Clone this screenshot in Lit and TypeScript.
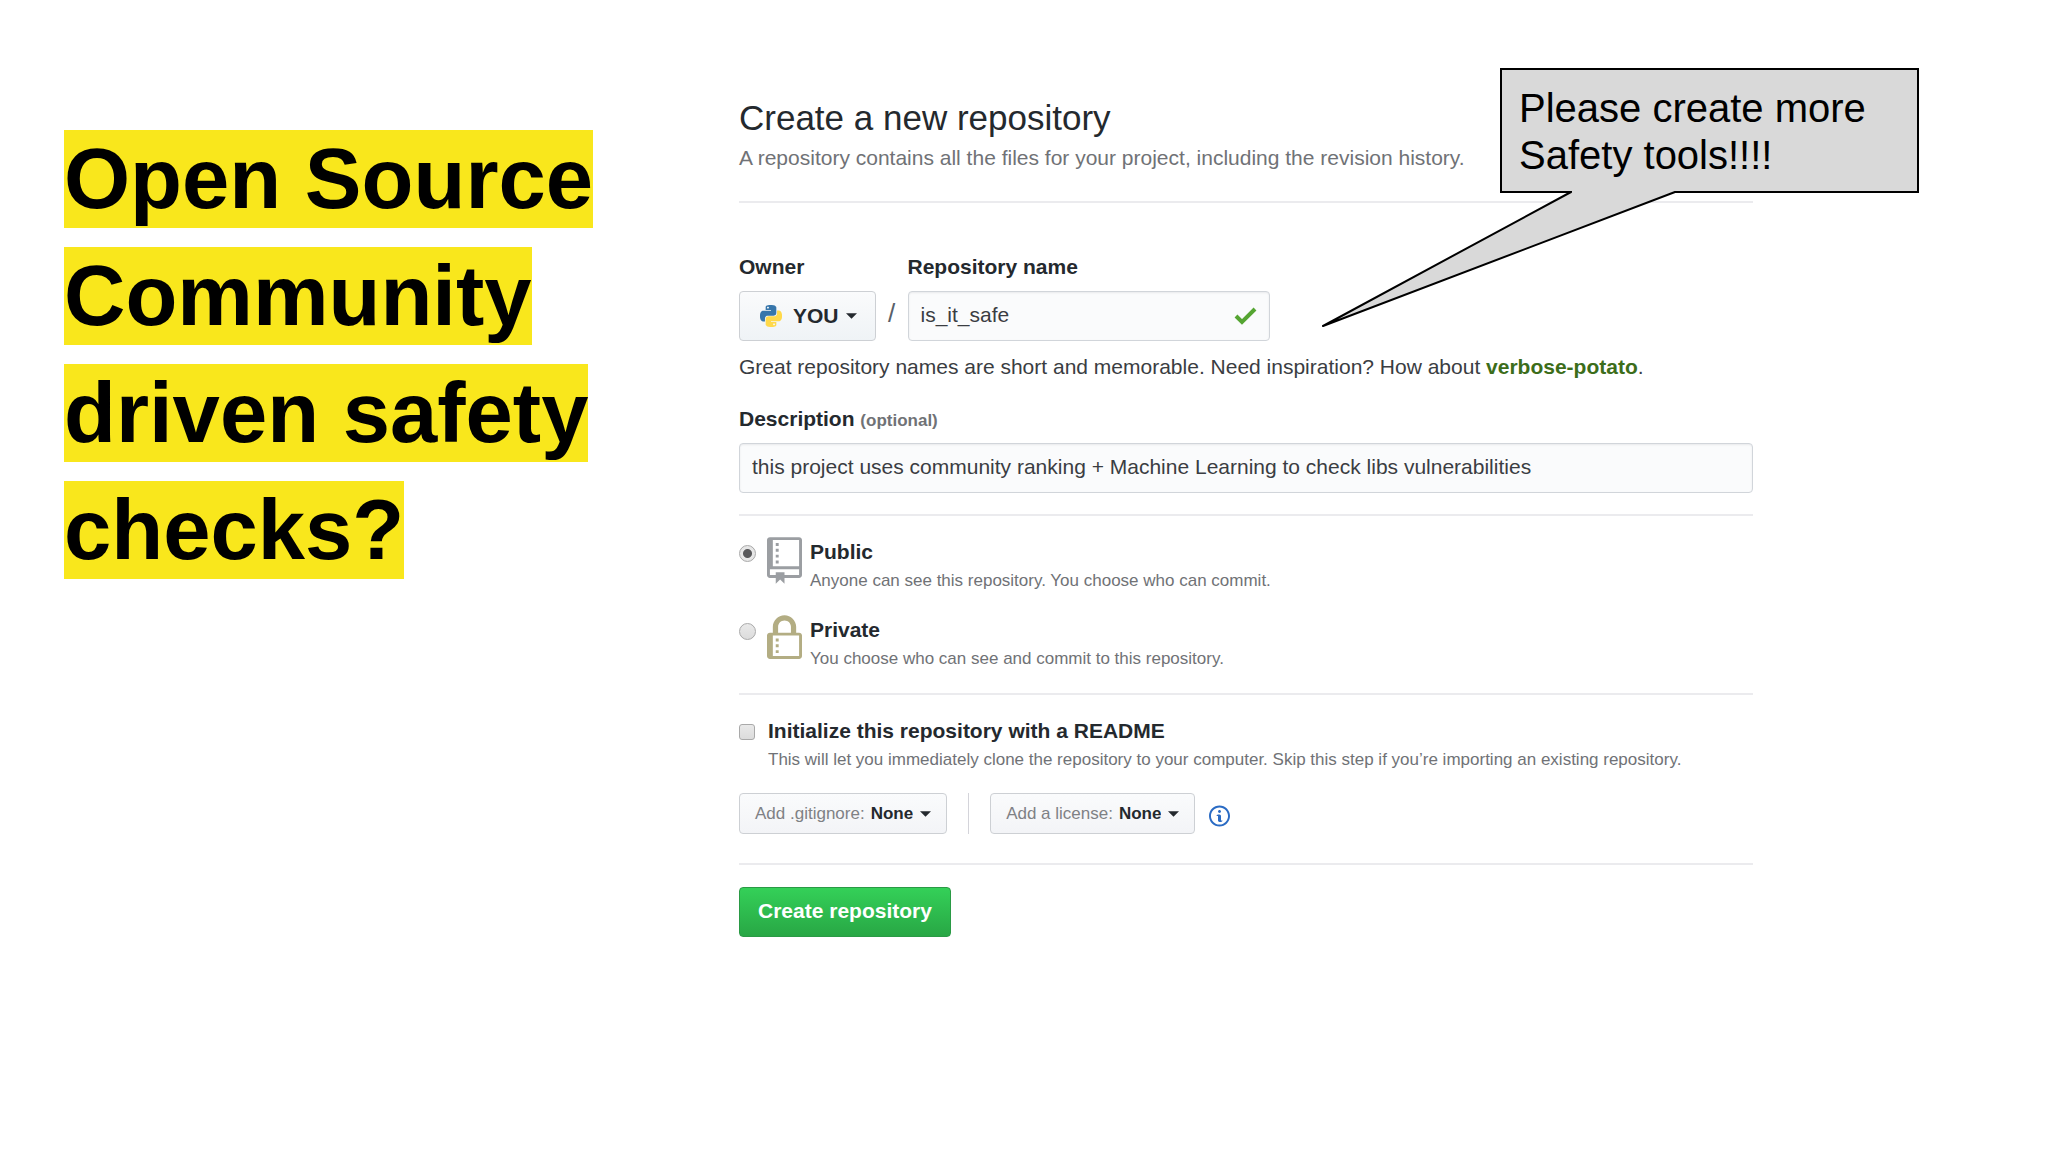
import { LitElement, html, css, svg } from "lit";
import { customElement, state } from "lit/decorators.js";

const PYTHON_HALF =
  "M14.25.18l.9.2.73.26.59.3.45.32.34.34.25.34.16.33.1.3.04.26.02.2-.01.13V8.5l-.05.63-.13.55-.21.46-.26.38-.3.31-.33.25-.35.19-.35.14-.33.1-.3.07-.26.04-.21.02H8.77l-.69.05-.59.14-.5.22-.41.27-.33.32-.27.35-.2.36-.15.37-.1.35-.07.32-.04.27-.02.21v3.06H3.17l-.21-.03-.28-.07-.32-.12-.35-.18-.36-.26-.36-.36-.35-.46-.32-.59-.28-.73-.21-.88-.14-1.05-.05-1.23.06-1.22.16-1.04.24-.87.32-.71.36-.57.4-.44.42-.33.42-.24.4-.16.36-.1.32-.05.24-.01h.16l.06.01h8.16v-.83H6.18l-.01-2.75-.02-.37.05-.34.11-.31.17-.28.25-.26.31-.23.38-.2.44-.18.51-.15.58-.12.64-.1.71-.06.77-.04.84-.02 1.27.05zm-6.3 1.98l-.23.33-.08.41.08.41.23.34.33.22.41.09.41-.09.33-.22.23-.34.08-.41-.08-.41-.23-.33-.33-.22-.41-.09-.41.09z";

const REPO =
  "M4 9H3V8h1v1zm0-3H3v1h1V6zm0-2H3v1h1V4zm0-2H3v1h1V2zm8-1v12c0 .55-.45 1-1 1H6v2l-1.5-1.5L3 16v-2H1c-.55 0-1-.45-1-1V1c0-.55.45-1 1-1h10c.55 0 1 .45 1 1zm-1 10H1v2h2v-1h3v1h5v-2zm0-10H2v9h9V1z";

const LOCK =
  "M4 13H3v-1h1v1zm8-6v7c0 .55-.45 1-1 1H1c-.55 0-1-.45-1-1V7c0-.55.45-1 1-1h1V4c0-2.2 1.8-4 4-4s4 1.8 4 4v2h1c.55 0 1 .45 1 1zM3.8 6h4.41V4c0-1.22-.98-2.2-2.2-2.2-1.22 0-2.2.98-2.2 2.2v2H3.8zM11 7H2v7h9V7zM4 8H3v1h1V8zm0 2H3v1h1v-1z";

const INFO =
  "M6.3 5.69a.942.942 0 01-.28-.7c0-.28.09-.52.28-.7.19-.18.42-.28.7-.28.28 0 .52.09.7.28.18.19.28.42.28.7 0 .28-.09.52-.28.7a1 1 0 01-.7.3c-.28 0-.52-.11-.7-.3zM8 7.99c-.02-.25-.11-.48-.31-.69-.2-.19-.42-.3-.69-.31H6c-.27.02-.48.13-.69.31-.2.2-.3.44-.31.69h1v3c.02.27.11.5.31.69.2.2.42.31.69.31h1c.27 0 .48-.11.69-.31.2-.19.3-.42.31-.69H8V7.98v.01zM7 2.3c-3.14 0-5.7 2.54-5.7 5.68 0 3.14 2.56 5.7 5.7 5.7s5.7-2.55 5.7-5.7c0-3.15-2.56-5.69-5.7-5.69v.01zM7 .98c3.86 0 7 3.14 7 7s-3.14 7-7 7-7-3.12-7-7 3.14-7 7-7z";

const VISIBILITIES = [
  {
    id: "public",
    name: "Public",
    note: "Anyone can see this repository. You choose who can commit.",
    icon: svg`<path d=${REPO}></path>`,
  },
  {
    id: "private",
    name: "Private",
    note: "You choose who can see and commit to this repository.",
    icon: svg`<path d=${LOCK}></path>`,
  },
];

const caret = html`<svg class="caret" viewBox="0 0 12 6" aria-hidden="true">
  <path d="M0 0h12L6 6z"></path>
</svg>`;

@customElement("repo-form")
export class RepoForm extends LitElement {
  @state() private visibility = "public";

  static styles = css`
    :host {
      display: block;
      color: #24292e;
      font: 21px/30px "Liberation Sans", Arial, sans-serif;
    }
    * {
      box-sizing: border-box;
    }
    form,
    h1,
    p {
      margin: 0;
    }
    h1 {
      margin-bottom: 4px;
      font-size: 35px;
      line-height: 42px;
      font-weight: 400;
    }
    .muted {
      color: #707276;
    }
    .small {
      font-size: 17px;
      line-height: 27px;
    }
    .header {
      padding-bottom: 28px;
    }
    .section {
      border-top: 2px solid #ebebee;
      padding: 21px 0;
    }
    .section.first {
      padding-top: 49px;
    }
    label {
      font-weight: 700;
    }
    .names {
      display: flex;
      align-items: flex-end;
      gap: 10px;
    }
    .field {
      display: flex;
      flex-direction: column;
      align-items: flex-start;
      gap: 9px;
    }
    .slash {
      width: 12px;
      height: 50px;
      line-height: 44px;
      font-size: 26px;
      text-align: center;
      color: #586069;
    }
    .picker {
      display: inline-flex;
      align-items: center;
      height: 50px;
      padding: 0 18px 0 20px;
      border: 1px solid #cdd0d4;
      border-radius: 4px;
      background: linear-gradient(#fafbfc, #eff3f6);
      font-weight: 400;
    }
    .picker.compact {
      height: 41px;
      padding: 0 15px;
      font-size: 17px;
      color: #7f8185;
      background: linear-gradient(#fafbfc, #f3f4f7);
    }
    select {
      appearance: none;
      field-sizing: content;
      margin: 0;
      border: 0;
      padding: 0;
      background: none;
      color: #24292e;
      font: inherit;
      font-weight: 700;
    }
    .picker select {
      margin: 0 7px 0 6px;
    }
    .caret {
      width: 11px;
      height: 6px;
      fill: #24292e;
    }
    .python {
      width: 22px;
      height: 22px;
      margin-right: 5px;
    }
    .blue {
      fill: #3776ab;
    }
    .yellow {
      fill: #ffd94a;
    }
    .text {
      width: 100%;
      height: 50px;
      padding: 0 12px 2px;
      border: 1px solid #d1d5da;
      border-radius: 4px;
      background: #fafbfc;
      box-shadow: inset 0 1px 2px rgba(27, 31, 35, 0.08);
      color: #3a3d42;
      font: inherit;
    }
    .repo-name {
      position: relative;
      width: 362px;
    }
    .check {
      position: absolute;
      right: 13px;
      top: 16px;
      width: 23px;
      height: 18px;
      fill: none;
      stroke: #55a532;
      stroke-width: 4;
    }
    .hint {
      margin: 11px 0 22px;
      color: #3a3d42;
    }
    a {
      color: #3c6d1a;
      font-weight: 700;
      text-decoration: none;
    }
    .section.visibility {
      display: flex;
      flex-direction: column;
      gap: 21px;
    }
    .choice {
      display: grid;
      grid-template-columns: 28px 43px 1fr;
      align-items: start;
    }
    .choice input,
    .readme input {
      appearance: none;
      width: 17px;
      height: 17px;
      margin: 8px 0 0;
      border: 1px solid #a9a9a9;
      border-radius: 50%;
      background: linear-gradient(#e9e9e9, #dcdcdc);
    }
    .choice input:checked {
      background: radial-gradient(circle, #58585a 4px, #e6e6e6 5px);
    }
    .glyph {
      width: 35px;
      height: 47px;
      fill: #9b9ea2;
    }
    .glyph.private {
      fill: #b3ad83;
    }
    .body {
      display: flex;
      flex-direction: column;
    }
    .readme {
      display: grid;
      grid-template-columns: 29px 1fr;
      align-items: start;
      margin-bottom: 20px;
    }
    .readme input {
      width: 16px;
      height: 16px;
      border-radius: 3px;
    }
    .section.init {
      padding-bottom: 29px;
    }
    .section.actions {
      padding-top: 22px;
    }
    .extras {
      display: flex;
      align-items: center;
    }
    .divider {
      width: 1px;
      height: 41px;
      margin: 0 21px;
      background: #d4d4da;
    }
    .info {
      margin-left: 14px;
      padding: 4px 0 0;
      border: 0;
      background: none;
      line-height: 0;
    }
    .info svg {
      width: 21px;
      height: 24px;
      fill: #2a6bc4;
    }
    .submit {
      height: 50px;
      padding: 0 18px 2px;
      border: 1px solid #2a9a45;
      border-radius: 4px;
      background: linear-gradient(#34d058, #28a745);
      color: #fff;
      font: inherit;
      font-weight: 700;
    }
  `;

  render() {
    return html`
      <form @submit=${(e: Event) => e.preventDefault()}>
        <div class="header">
          <h1>Create a new repository</h1>
          <p class="muted">
            A repository contains all the files for your project, including the revision history.
          </p>
        </div>

        <div class="section first">
          <div class="names">
            <div class="field">
              <label for="owner">Owner</label>
              <span class="picker">
                <svg class="python" viewBox="0 0 24 24" aria-hidden="true">
                  <path class="blue" d=${PYTHON_HALF}></path>
                  <path class="yellow" transform="rotate(180 12 12)" d=${PYTHON_HALF}></path>
                </svg>
                <select id="owner">
                  <option>YOU</option>
                </select>
                ${caret}
              </span>
            </div>
            <span class="slash">/</span>
            <div class="field">
              <label for="name">Repository name</label>
              <div class="repo-name">
                <input class="text" id="name" type="text" value="is_it_safe" />
                <svg class="check" viewBox="0 0 23 18" aria-hidden="true">
                  <path d="M2 9l6 6L21 2"></path>
                </svg>
              </div>
            </div>
          </div>
          <p class="hint">
            Great repository names are short and memorable. Need inspiration? How about
            <a href="#verbose-potato">verbose-potato</a>.
          </p>
          <div class="field">
            <label for="description"
              >Description <span class="muted small">(optional)</span></label
            >
            <input
              class="text"
              id="description"
              type="text"
              value="this project uses community ranking + Machine Learning to check libs vulnerabilities"
            />
          </div>
        </div>

        <div class="section visibility">
          ${VISIBILITIES.map(
            (v) => html`
              <div class="choice">
                <input
                  type="radio"
                  name="visibility"
                  id=${v.id}
                  .checked=${this.visibility === v.id}
                  @change=${() => (this.visibility = v.id)}
                />
                <svg class="glyph ${v.id}" viewBox="0 0 12 16" aria-hidden="true">${v.icon}</svg>
                <div class="body">
                  <label for=${v.id}>${v.name}</label>
                  <span class="muted small">${v.note}</span>
                </div>
              </div>
            `
          )}
        </div>

        <div class="section init">
          <div class="readme">
            <input type="checkbox" id="readme" />
            <div class="body">
              <label for="readme">Initialize this repository with a README</label>
              <span class="muted small"
                >This will let you immediately clone the repository to your computer. Skip this step
                if you’re importing an existing repository.</span
              >
            </div>
          </div>
          <div class="extras">
            <label class="picker compact"
              >Add .gitignore:<select>
                <option>None</option></select
              >${caret}</label
            >
            <span class="divider"></span>
            <label class="picker compact"
              >Add a license:<select>
                <option>None</option></select
              >${caret}</label
            >
            <button class="info" type="button" aria-label="About licenses">
              <svg viewBox="0 0 14 16" aria-hidden="true"><path d=${INFO}></path></svg>
            </button>
          </div>
        </div>

        <div class="section actions">
          <button class="submit" type="submit">Create repository</button>
        </div>
      </form>
    `;
  }
}

@customElement("speech-callout")
export class SpeechCallout extends LitElement {
  static styles = css`
    :host {
      display: block;
      box-sizing: border-box;
      width: 419px;
      padding: 15px 17px 12px;
      border: 2px solid #000;
      background: #d9d9d9;
      color: #000;
      font: 40px/47px "Liberation Sans", Arial, sans-serif;
    }
    .tail {
      position: absolute;
      left: -182px;
      top: 120px;
      width: 360px;
      height: 142px;
    }
    .fill {
      fill: #d9d9d9;
    }
    .edge {
      fill: none;
      stroke: #000;
      stroke-width: 2;
      stroke-linejoin: round;
      stroke-linecap: round;
    }
  `;

  render() {
    return html`
      <svg class="tail" viewBox="0 0 360 142" aria-hidden="true">
        <path class="fill" d="M252 0V2L3 136L355 2V0z"></path>
        <path class="edge" d="M251 2L3 136L355 2"></path>
      </svg>
      Please create more Safety tools!!!!
    `;
  }
}

@customElement("app-root")
export class AppRoot extends LitElement {
  static styles = css`
    :host {
      display: block;
      min-height: 100vh;
      background: #fff;
    }
    .slide {
      display: grid;
      grid-template-columns: minmax(0, 675fr) minmax(0, 1014fr);
      align-items: start;
      padding: 97px 295px 48px 64px;
    }
    .title {
      margin: 23px 0 0;
      padding-right: 100px;
      color: #000;
      font: 700 85px/117px "Liberation Sans", Arial, sans-serif;
    }
    .title mark {
      padding: 1px 0 2px;
      background: #f9e71c;
      color: inherit;
    }
    .content {
      position: relative;
    }
    .callout {
      position: absolute;
      right: -166px;
      top: -29px;
    }
  `;

  render() {
    return html`
      <main class="slide">
        <h2 class="title"><mark>Open Source Community driven safety checks?</mark></h2>
        <div class="content">
          <repo-form></repo-form>
          <speech-callout class="callout"></speech-callout>
        </div>
      </main>
    `;
  }
}
